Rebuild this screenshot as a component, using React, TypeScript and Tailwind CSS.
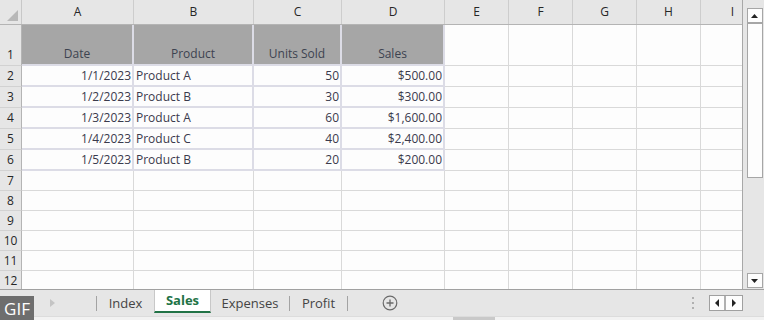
import React from "react";

const cols = [
  { l: "A", w: "w-[112px]" },
  { l: "B", w: "w-[120px]" },
  { l: "C", w: "w-[88px]" },
  { l: "D", w: "w-[103px]" },
  { l: "E", w: "w-[64px]" },
  { l: "F", w: "w-[64px]" },
  { l: "G", w: "w-[64px]" },
  { l: "H", w: "w-[64px]" },
  { l: "I", w: "w-[64px]" },
];

const data = [
  ["Date", "Product", "Units Sold", "Sales"],
  ["1/1/2023", "Product A", "50", "$500.00"],
  ["1/2/2023", "Product B", "30", "$300.00"],
  ["1/3/2023", "Product A", "60", "$1,600.00"],
  ["1/4/2023", "Product C", "40", "$2,400.00"],
  ["1/5/2023", "Product B", "20", "$200.00"],
];

const rowHeight = (r: number) => {
  if (r === 0) return "h-[41px]";
  if (r < 6) return "h-[21px]";
  return "h-[20px]";
};

function Cell({ r, c }: { r: number; c: number }) {
  const inRange = r < 6 && c < 4;
  const text = inRange ? data[r][c] : "";
  const border = inRange
    ? "border-r-2 border-b-2 border-[#dcdce6]"
    : "border-r border-b border-[#d9d9d9]";
  let align = "items-center justify-end pr-[1px]";
  if (r === 0) align = "items-end justify-center pb-[4px]";
  else if (c === 1) align = "items-center justify-start pl-[2px]";
  return (
    <div
      className={`${cols[c].w} shrink-0 flex ${align} ${border} ${
        r === 0 && c < 4 ? "bg-[#a6a6a6] text-[#3d4350]" : "bg-[#fdfdfd] text-[#3a3a4c]"
      }`}
    >
      {text}
    </div>
  );
}

function TabSep() {
  return <div className="w-px h-[15px] bg-[#a3a3a3]" />;
}

export default function App() {
  return (
    <div
      className="w-[764px] h-[320px] bg-[#e6e6e6] flex flex-col overflow-hidden relative text-[12px] leading-none"
      style={{ fontFamily: '"Open Sans", "Noto Sans", sans-serif' }}
    >
      <div className="flex h-[290px] border-b border-[#a0a0a0]">
        {/* grid */}
        <div className="w-[743px] overflow-hidden flex flex-col border-r border-[#a8a8a8]">
          <div className="flex h-[25px] shrink-0 border-b border-[#b4b4b4] text-[#262626]">
            <div className="w-[22px] shrink-0 flex items-end justify-end p-[3px] border-r border-[#c8c8c8]">
              <svg width="11" height="11" viewBox="0 0 11 11">
                <polygon points="11,0 11,11 0,11" fill="#b8b8b8" />
              </svg>
            </div>
            {cols.map((col) => (
              <div
                key={col.l}
                className={`${col.w} shrink-0 flex items-center justify-center border-r border-[#cdcdcd]`}
              >
                {col.l}
              </div>
            ))}
          </div>
          {Array.from({ length: 12 }).map((_, r) => (
            <div key={r} className={`flex shrink-0 ${rowHeight(r)}`}>
              <div
                className={`w-[22px] shrink-0 flex justify-center border-r border-b border-r-[#b4b4b4] border-b-[#d2d2d2] text-[#262626] ${
                  r === 0 ? "items-end pb-[4px]" : "items-center"
                }`}
              >
                {r + 1}
              </div>
              {cols.map((_, c) => (
                <Cell key={c} r={r} c={c} />
              ))}
            </div>
          ))}
        </div>
        {/* vertical scrollbar */}
        <div className="flex-1 flex flex-col items-center pt-[8px] pb-[1px] pl-[2px]">
          <div className="w-[16px] h-[15px] bg-[#fdfdfd] border border-[#a6a6a6] flex items-center justify-center">
            <svg width="7" height="4" viewBox="0 0 7 4">
              <polygon points="3.5,0 7,4 0,4" fill="#222" />
            </svg>
          </div>
          <div className="w-[16px] h-[155px] bg-[#fdfdfd] border border-[#a6a6a6]" />
          <div className="flex-1" />
          <div className="w-[16px] h-[15px] bg-[#fdfdfd] border border-[#a6a6a6] flex items-center justify-center">
            <svg width="7" height="4" viewBox="0 0 7 4">
              <polygon points="0,0 7,0 3.5,4" fill="#222" />
            </svg>
          </div>
        </div>
      </div>

      {/* sheet tabs */}
      <div className="flex items-stretch h-[26px] text-[#444] text-[13px]">
        <div className="w-[96px] shrink-0 flex items-center pl-[50px]">
          <svg width="5" height="8" viewBox="0 0 5 8">
            <polygon points="0,0 5,4 0,8" fill="#c4c4c4" />
          </svg>
        </div>
        <div className="flex items-center">
          <TabSep />
        </div>
        <div className="w-[57px] flex items-center justify-center">Index</div>
        <div className="w-[57px] flex items-center justify-center bg-white border-x border-[#c8c8c8] border-b-2 border-b-[#217346] mb-[3px] font-bold text-[#217346]">
          Sales
        </div>
        <div className="w-[78px] flex items-center justify-center">Expenses</div>
        <div className="flex items-center">
          <TabSep />
        </div>
        <div className="w-[57px] flex items-center justify-center">Profit</div>
        <div className="flex items-center">
          <TabSep />
        </div>
        <div className="w-[84px] flex items-center justify-center">
          <svg width="16" height="16" viewBox="0 0 16 16">
            <circle cx="8" cy="8" r="6.8" fill="none" stroke="#6a6a6a" strokeWidth="1.2" />
            <path d="M8 4.5v7M4.5 8h7" stroke="#6a6a6a" strokeWidth="1.3" />
          </svg>
        </div>
        <div className="flex-1" />
        <div className="flex flex-col justify-center gap-[3px] mr-[15px]">
          <div className="w-[2px] h-[2px] bg-[#b0b0b0]" />
          <div className="w-[2px] h-[2px] bg-[#b0b0b0]" />
          <div className="w-[2px] h-[2px] bg-[#b0b0b0]" />
        </div>
        <div className="flex items-center mr-[21px]">
          <div className="flex h-[16px] border border-[#a0a0a0] bg-[#fdfdfd]">
            <div className="w-[16px] flex items-center justify-center border-r-2 border-[#b0b0b0]">
              <svg width="4" height="8" viewBox="0 0 4 8">
                <polygon points="4,0 4,8 0,4" fill="#222" />
              </svg>
            </div>
            <div className="w-[16px] flex items-center justify-center">
              <svg width="4" height="8" viewBox="0 0 4 8">
                <polygon points="0,0 4,4 0,8" fill="#222" />
              </svg>
            </div>
          </div>
        </div>
      </div>

      {/* horizontal scroll strip */}
      <div className="flex-1 bg-[#f2f2f2] border-t border-[#dcdcdc] flex">
        <div className="ml-[453px] w-[42px] bg-[#c9c9c9]" />
      </div>

      {/* GIF watermark */}
      <div className="absolute left-0 top-[296px] w-[34px] h-[24px] bg-[#6e6e6e] text-white text-[17px] flex items-center justify-center">
        GIF
      </div>
    </div>
  );
}
